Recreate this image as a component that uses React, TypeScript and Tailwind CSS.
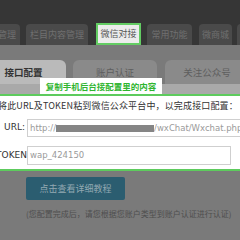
import React from 'react';

const cjk = { fontFamily: "'Noto Sans CJK SC', 'Noto Sans', sans-serif" };
const latin = { fontFamily: "'DejaVu Sans', 'Noto Sans CJK SC', sans-serif" };

function TopTab({ label, className }: { label: string; className: string }) {
  return (
    <div
      className={`h-[21px] shrink-0 rounded-t-[4px] bg-[#4a4a4a] text-[9px] text-[#707070] flex items-center ${className}`}
    >
      {label}
    </div>
  );
}

export default function App() {
  return (
    <div className="w-[240px] h-[240px] overflow-hidden bg-[#7a7a7a] relative" style={cjk}>
      {/* dark header */}
      <div className="bg-[#363636]">
        <div className="h-[23px]" />
        <div className="flex items-end h-[22px] ml-[-40px]">
          <TopTab label="模块管理" className="w-[60px] justify-end pr-[4px]" />
          <TopTab label="栏目内容管理" className="w-[62px] ml-[6px] justify-center" />
          <div className="h-[22px] w-[45px] ml-[8px] shrink-0 bg-[#ececec] border-2 border-[#63cc63] text-[9px] text-[#555] flex items-center justify-center">
            微信对接
          </div>
          <TopTab label="常用功能" className="w-[45px] ml-[6px] justify-center" />
          <TopTab label="微商城" className="w-[33px] ml-[7px] justify-center" />
          <TopTab label="" className="w-[30px] ml-[5px]" />
        </div>
      </div>

      {/* sub tabs */}
      <div className="flex items-end h-[39px] ml-[-10px]">
        <div className="h-[24px] w-[76px] shrink-0 rounded-t-[6px] bg-[#bababa] text-[9.5px] font-bold text-[#333] flex items-center justify-center pr-[9px]">
          接口配置
        </div>
        <div className="h-[24px] w-[84px] ml-[7px] shrink-0 rounded-t-[6px] bg-[#8a8a8a] text-[9.5px] text-[#5e5e5e] flex items-center justify-center">
          账户认证
        </div>
        <div className="h-[24px] w-[84px] ml-[8px] shrink-0 rounded-t-[6px] bg-[#8a8a8a] text-[9.5px] text-[#5e5e5e] flex items-center justify-center">
          关注公众号
        </div>
      </div>
      <div className="h-[10px] bg-[#a9a9a9]" />

      {/* highlighted panel */}
      <div className="bg-white border-y-2 border-[#5dcb5d] h-[77px] pt-[3px]">
        <div className="text-[9px] text-[#333] whitespace-nowrap ml-[-2px] leading-[14px] tracking-[0.15px]">
          将此URL及TOKEN粘到微信公众平台中，以完成接口配置：
        </div>
        <div className="flex items-center mt-[6px]">
          <div className="w-[26px] shrink-0 text-right text-[9px] text-[#333] pr-[1px]" style={latin}>URL:</div>
          <div className="ml-[1px] h-[18px] w-[230px] shrink-0 border border-[#cfcfcf] flex items-center pl-[2px] whitespace-nowrap overflow-hidden text-[8.5px] text-[#9a9a9a]" style={latin}>
            http://
            <span className="inline-block w-[98px] h-[7px] bg-[#858585]" />
            /wxChat/Wxchat.php?
          </div>
        </div>
        <div className="flex items-center mt-[9px]">
          <div className="w-[27px] shrink-0 text-[9px] text-[#333] whitespace-nowrap flex justify-end" style={latin}>TOKEN</div>
          <div className="h-[19px] w-[204px] border border-[#cfcfcf] flex items-center pl-[2px] text-[8.5px] text-[#9a9a9a]" style={latin}>
            wap_424150
          </div>
        </div>
      </div>

      {/* button + note */}
      <div className="pl-[26px] pt-[6px]">
        <div className="w-[99px] h-[23px] rounded-[2px] bg-[#2b5d70] text-[9px] text-[#93a9b2] flex items-center justify-center">
          点击查看详细教程
        </div>
        <div className="mt-[8px] text-[8px] text-[#4e4e4e] whitespace-nowrap">
          (您配置完成后，请您根据您账户类型到账户认证进行认证)
        </div>
      </div>

      {/* tip bubble */}
      <div className="absolute left-[40px] top-[78px] w-[122px] h-[16px] bg-white text-[8.5px] font-bold text-[#2fb52f] whitespace-nowrap flex items-center justify-center">
        复制手机后台接配置里的内容
      </div>
    </div>
  );
}
